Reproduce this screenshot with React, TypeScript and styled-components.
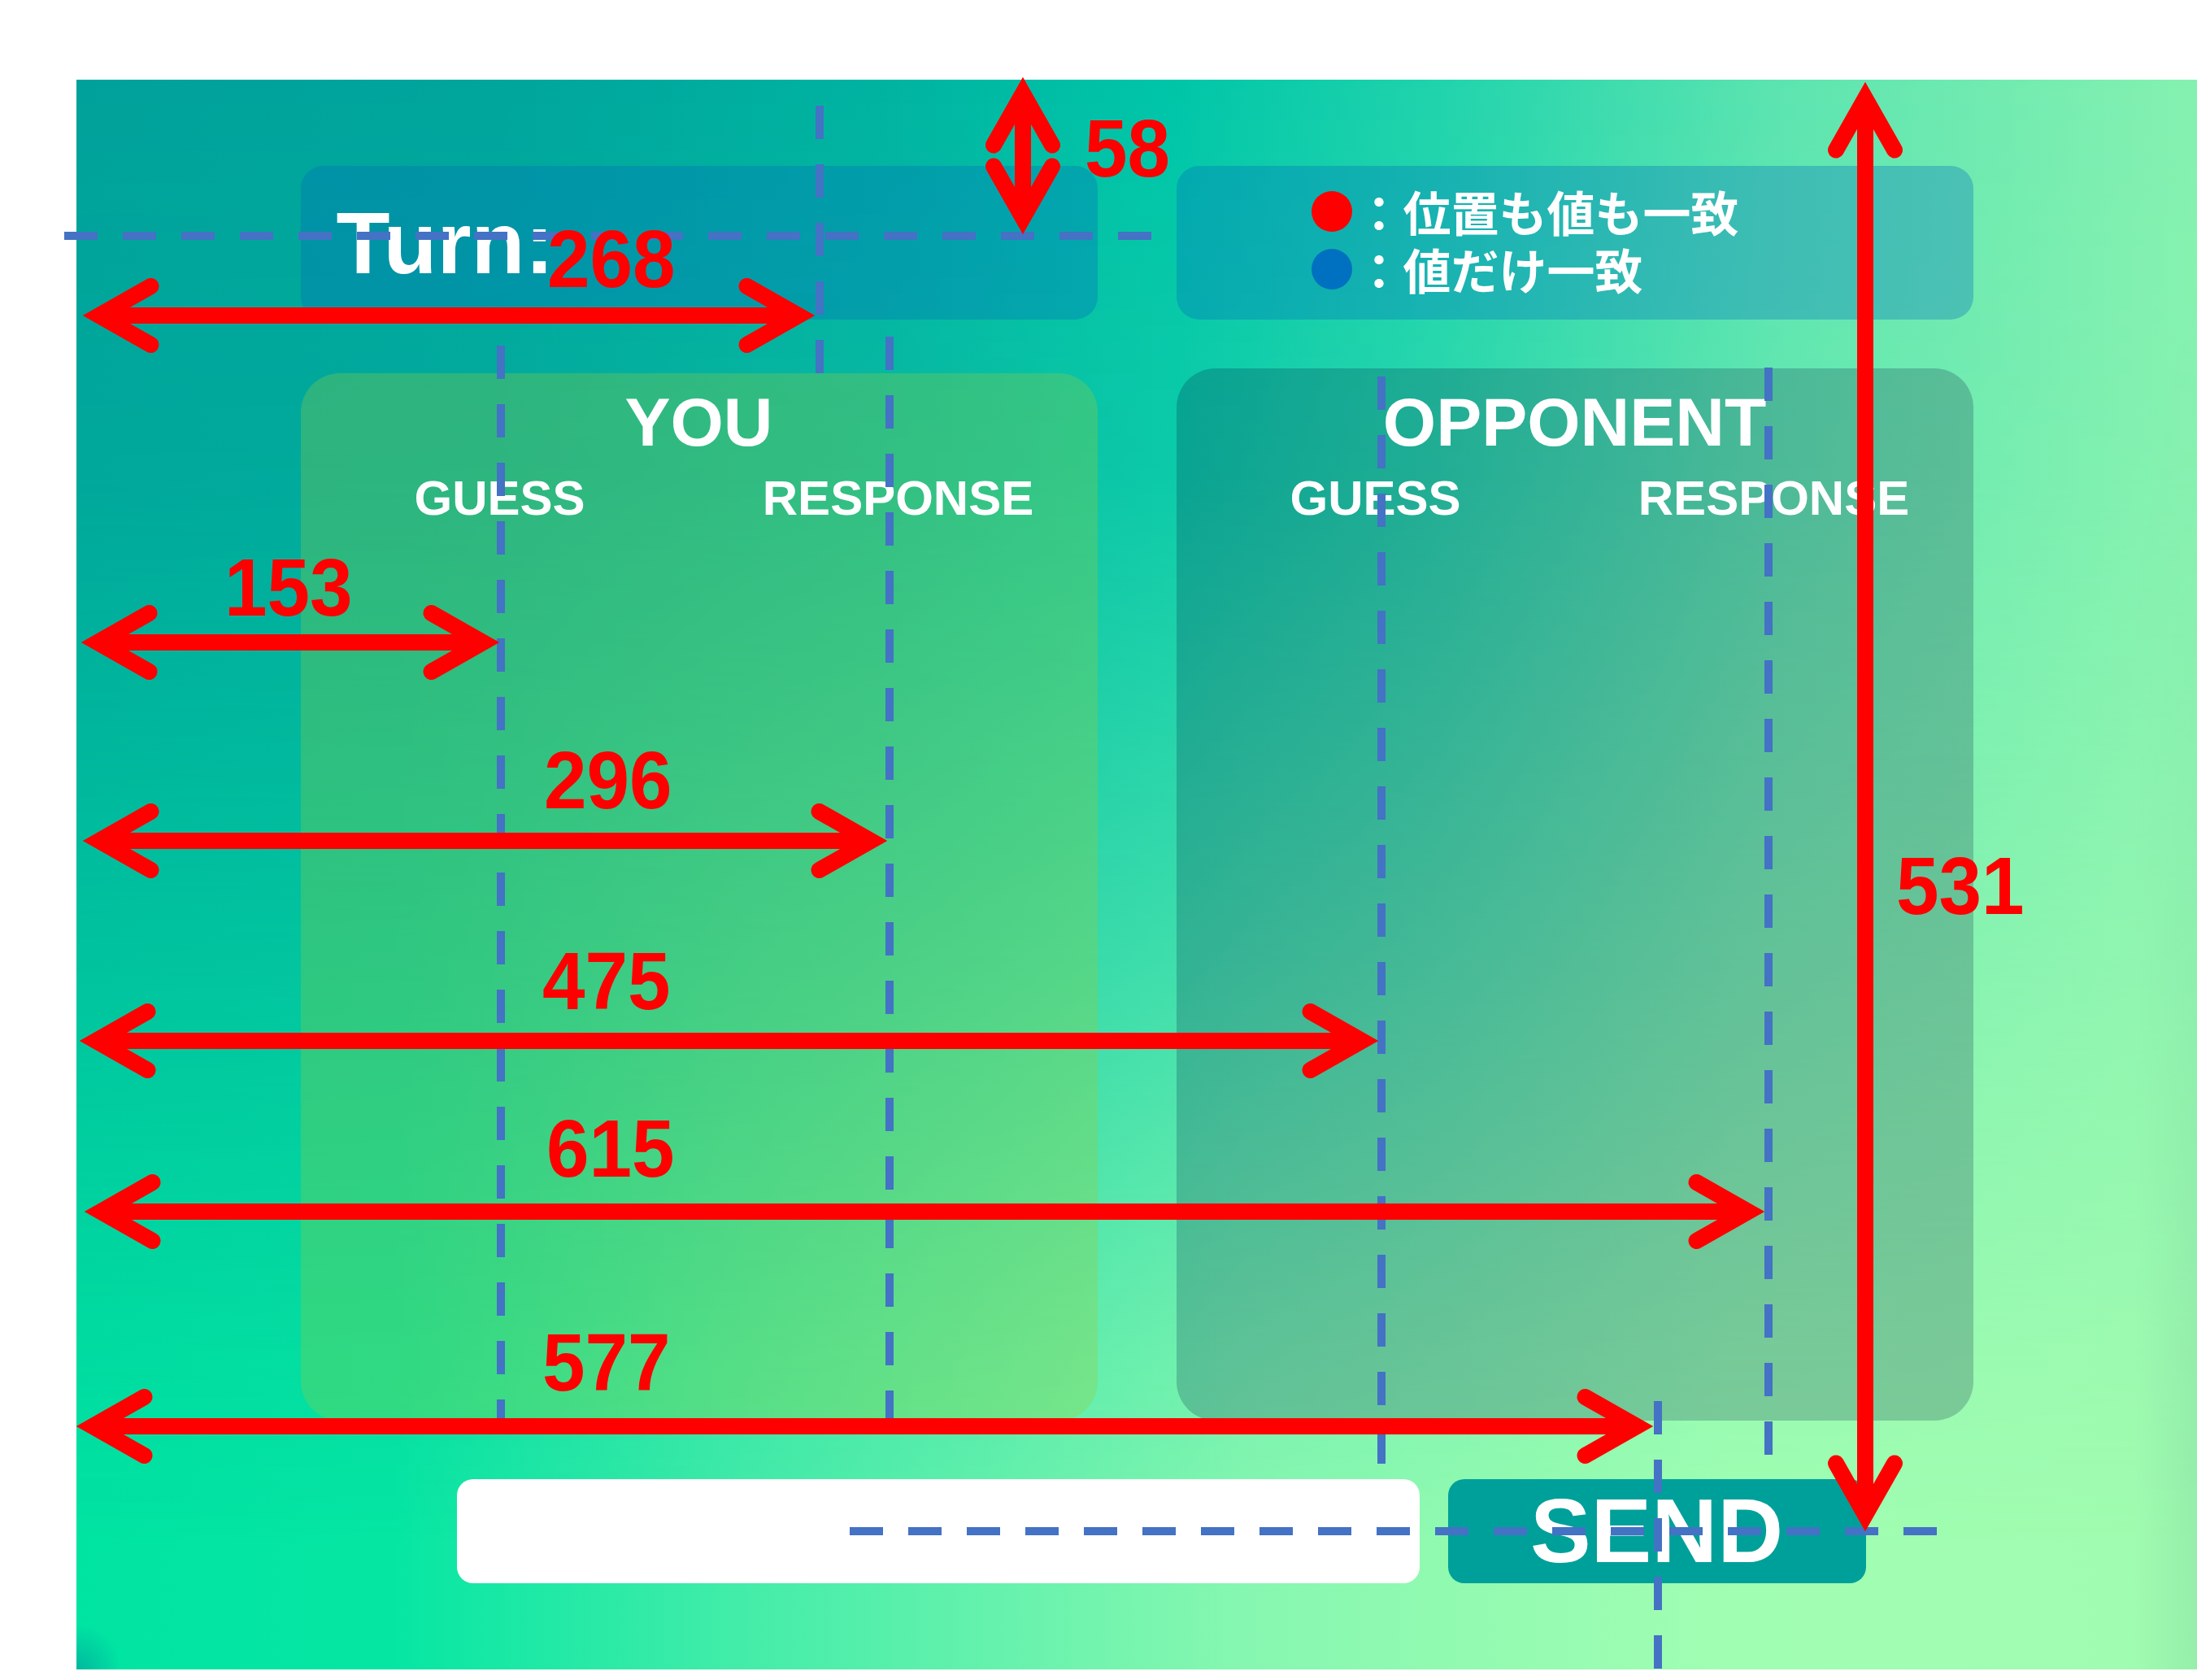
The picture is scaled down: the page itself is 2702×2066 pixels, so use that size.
import React from "react";
import styled, { createGlobalStyle } from "styled-components";

const GlobalStyle = createGlobalStyle`
  html, body {
    margin: 0;
    padding: 0;
    background: #ffffff;
  }
  body {
    font-family: "Liberation Sans", Arial, sans-serif;
  }
  * { box-sizing: border-box; }
`;

const Page = styled.div`
  position: relative;
  width: 2702px;
  height: 2066px;
  padding: 98px 0 13px 94px;
  background: #ffffff;
  overflow: hidden;
`;

const Screen = styled.main`
  position: relative;
  height: 100%;
  padding: 106px 0;
  display: flex;
  flex-direction: column;
  align-items: center;
  background:
    radial-gradient(circle at 0% 100%, rgba(0, 176, 158, 0.85) 0px, rgba(0, 176, 158, 0) 55px),
    linear-gradient(90deg, #00e4a2 0%, #06e6a3 15%, #45eda9 32%, #86f7b0 55%, #a0feb2 78%, #a0fcb0 97%, #96eeaa 100%);

  &::before {
    content: "";
    position: absolute;
    inset: 0;
    background: linear-gradient(90deg, #00a19a 0%, #00a59c 20%, #00b3a1 38%, #00c6a8 52%, #1fd3ac 64%, #5be4b0 80%, #85f1b0 100%);
    -webkit-mask-image: linear-gradient(180deg, #000 0%, rgba(0, 0, 0, 0.9) 25%, rgba(0, 0, 0, 0.5) 55%, rgba(0, 0, 0, 0.12) 80%, transparent 92%);
    mask-image: linear-gradient(180deg, #000 0%, rgba(0, 0, 0, 0.9) 25%, rgba(0, 0, 0, 0.5) 55%, rgba(0, 0, 0, 0.12) 80%, transparent 92%);
  }
`;

const Content = styled.div`
  position: relative;
  z-index: 1;
  width: 2057px;
  display: flex;
  flex-direction: column;
`;

const Header = styled.header`
  display: flex;
  gap: 97px;
`;

const HeaderCard = styled.div`
  width: 980px;
  height: 189px;
  border-radius: 28px;
  background: rgba(0, 108, 188, 0.33);
`;

const TurnCard = styled(HeaderCard)`
  display: flex;
  align-items: center;
  padding-left: 44px;
`;

const TurnLabel = styled.h1`
  margin: 0;
  font: 700 108px/1 "Liberation Sans", Arial, sans-serif;
  color: #ffffff;
`;

const LegendCard = styled(HeaderCard)`
  display: flex;
  flex-direction: column;
  padding: 20px 0 0 166px;
`;

const LegendRow = styled.div`
  height: 71px;
  display: flex;
  align-items: center;
  font: 700 59px/71px "Noto Sans CJK JP", "Noto Sans CJK SC", sans-serif;
  color: #ffffff;
  white-space: nowrap;
`;

const Dot = styled.span<{ $color: string }>`
  flex: none;
  width: 50px;
  height: 50px;
  border-radius: 50%;
  margin-right: 4px;
  background: ${(p) => p.$color};
`;

const Board = styled.section`
  display: flex;
  gap: 97px;
  height: 1294px;
  margin-top: 60px;
  align-items: flex-end;
`;

const PlayerPanel = styled.div<{ $tone: "you" | "opponent" }>`
  width: 980px;
  height: ${(p) => (p.$tone === "you" ? 1288 : 1294)}px;
  padding-top: ${(p) => (p.$tone === "you" ? 18 : 24)}px;
  border-radius: 48px;
  background: ${(p) =>
    p.$tone === "you" ? "rgba(150, 205, 60, 0.3)" : "rgba(0, 20, 60, 0.21)"};
  color: #ffffff;
`;

const PanelTitle = styled.h2`
  margin: 0;
  text-align: center;
  font: 700 84px/1 "Liberation Sans", Arial, sans-serif;
`;

const ColumnHeads = styled.div`
  display: grid;
  grid-template-columns: 1fr 1fr;
  margin-top: 22px;
`;

const ColumnHead = styled.div`
  text-align: center;
  font: 700 60px/1 "Liberation Sans", Arial, sans-serif;
`;

const InputRow = styled.form`
  display: flex;
  gap: 35px;
  margin-top: 72px;
  padding-left: 192px;
`;

const GuessInput = styled.input`
  width: 1184px;
  height: 128px;
  border: none;
  border-radius: 20px;
  background: #ffffff;
  outline: none;
  padding: 0 30px;
  font: 400 60px "Liberation Sans", Arial, sans-serif;
`;

const SendButton = styled.button`
  width: 514px;
  height: 128px;
  border: none;
  border-radius: 20px;
  background: #00a09a;
  color: #ffffff;
  padding: 0;
  font: 700 112px/1 "Liberation Sans", Arial, sans-serif;
  cursor: pointer;
`;

const Overlay = styled.svg`
  position: absolute;
  top: 0;
  left: 0;
  width: 2702px;
  height: 2066px;
  pointer-events: none;
  z-index: 2;
`;

const RED = "#ff0000";
const BLUE = "#4472c4";
const HEAD_BACK = 63.5;
const HEAD_SIDE = 36;
const MITER = 20;

function HArrow({ x1, x2, y }: { x1: number; x2: number; y: number }) {
  const a = x1 + MITER;
  const b = x2 - MITER;
  return (
    <g stroke={RED} strokeWidth={20} fill="none" strokeLinecap="round" strokeLinejoin="miter">
      <line x1={a} y1={y} x2={b} y2={y} strokeLinecap="butt" />
      <polyline points={`${a + HEAD_BACK},${y - HEAD_SIDE} ${a},${y} ${a + HEAD_BACK},${y + HEAD_SIDE}`} />
      <polyline points={`${b - HEAD_BACK},${y - HEAD_SIDE} ${b},${y} ${b - HEAD_BACK},${y + HEAD_SIDE}`} />
    </g>
  );
}

function VArrow({ x, y1, y2 }: { x: number; y1: number; y2: number }) {
  const a = y1 + MITER;
  const b = y2 - MITER;
  return (
    <g stroke={RED} strokeWidth={20} fill="none" strokeLinecap="round" strokeLinejoin="miter">
      <line x1={x} y1={a} x2={x} y2={b} strokeLinecap="butt" />
      <polyline points={`${x - HEAD_SIDE},${a + HEAD_BACK} ${x},${a} ${x + HEAD_SIDE},${a + HEAD_BACK}`} />
      <polyline points={`${x - HEAD_SIDE},${b - HEAD_BACK} ${x},${b} ${x + HEAD_SIDE},${b - HEAD_BACK}`} />
    </g>
  );
}

function Dash({ x1, y1, x2, y2 }: { x1: number; y1: number; x2: number; y2: number }) {
  return <line x1={x1} y1={y1} x2={x2} y2={y2} stroke={BLUE} strokeWidth={10} strokeDasharray="41 31" />;
}

function Label({ x, y, children }: { x: number; y: number; children: string }) {
  return (
    <text
      x={x}
      y={y}
      fill={RED}
      fontSize={100}
      fontWeight={700}
      fontFamily="'Liberation Sans', Arial, sans-serif"
      textLength={children.length * 52.5}
      lengthAdjust="spacingAndGlyphs"
    >
      {children}
    </text>
  );
}

function Annotations() {
  return (
    <Overlay viewBox="0 0 2702 2066">
      <Dash x1={79} y1={290} x2={1420} y2={290} />
      <Dash x1={1008} y1={130} x2={1008} y2={460} />
      <Dash x1={616} y1={425} x2={616} y2={1770} />
      <Dash x1={1094} y1={414} x2={1094} y2={1770} />
      <Dash x1={1699} y1={463} x2={1699} y2={1804} />
      <Dash x1={2175} y1={452} x2={2175} y2={1793} />
      <Dash x1={2039} y1={1723} x2={2039} y2={2053} />
      <Dash x1={1045} y1={1883} x2={2386} y2={1883} />

      <HArrow x1={102} x2={1002} y={388} />
      <HArrow x1={100} x2={614} y={790} />
      <HArrow x1={102} x2={1091} y={1034} />
      <HArrow x1={98} x2={1695} y={1280} />
      <HArrow x1={104} x2={2170} y={1490} />
      <HArrow x1={94} x2={2033} y={1754} />
      <VArrow x={1258} y1={95} y2={288} />
      <VArrow x={2294} y1={101} y2={1883} />

      <Label x={673} y={353}>268</Label>
      <Label x={1334} y={217}>58</Label>
      <Label x={276} y={757}>153</Label>
      <Label x={669} y={994}>296</Label>
      <Label x={667} y={1241}>475</Label>
      <Label x={672} y={1447}>615</Label>
      <Label x={667} y={1710}>577</Label>
      <Label x={2332} y={1124}>531</Label>
    </Overlay>
  );
}

export default function App() {
  return (
    <>
      <GlobalStyle />
      <Page>
        <Screen>
          <Content>
            <Header>
              <TurnCard>
                <TurnLabel>Turn:</TurnLabel>
              </TurnCard>
              <LegendCard>
                <LegendRow>
                  <Dot $color="#ff0000" />
                  ：位置も値も一致
                </LegendRow>
                <LegendRow>
                  <Dot $color="#0070c0" />
                  ：値だけ一致
                </LegendRow>
              </LegendCard>
            </Header>
            <Board>
              <PlayerPanel $tone="you">
                <PanelTitle>YOU</PanelTitle>
                <ColumnHeads>
                  <ColumnHead>GUESS</ColumnHead>
                  <ColumnHead>RESPONSE</ColumnHead>
                </ColumnHeads>
              </PlayerPanel>
              <PlayerPanel $tone="opponent">
                <PanelTitle>OPPONENT</PanelTitle>
                <ColumnHeads>
                  <ColumnHead>GUESS</ColumnHead>
                  <ColumnHead>RESPONSE</ColumnHead>
                </ColumnHeads>
              </PlayerPanel>
            </Board>
            <InputRow onSubmit={(e) => e.preventDefault()}>
              <GuessInput type="text" aria-label="guess" />
              <SendButton type="submit">SEND</SendButton>
            </InputRow>
          </Content>
        </Screen>
        <Annotations />
      </Page>
    </>
  );
}
